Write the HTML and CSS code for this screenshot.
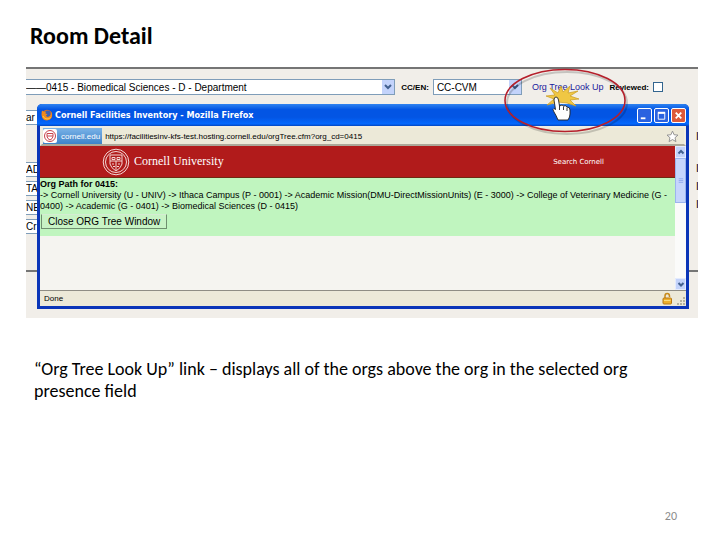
FILE: index.html
```html
<!DOCTYPE html>
<html lang="en">
<head>
  <meta charset="UTF-8" />
  <meta name="viewport" content="width=device-width, initial-scale=1.0"/>
  <title>Room Detail</title>
  <link rel="stylesheet" href="styles.css">
</head>
<body>
  <main class="slide">
    <h1>Room Detail</h1>

    <div class="capture">
      <!-- Room form behind the popup -->
      <form class="form-row">
        <select class="org-select" aria-label="Organization">
          <option>——0415 - Biomedical Sciences - D - Department</option>
        </select>
        <label class="bold-label" for="ccen">CC/EN:</label>
        <select class="cc-select" id="ccen">
          <option>CC-CVM</option>
        </select>
        <a class="lookup-link" href="#">Org Tree Look Up</a>
        <label class="bold-label" for="reviewed">Reviewed:</label>
        <input type="checkbox" id="reviewed">
      </form>
      <div class="form-body">
        <div class="side-left">
          <div class="field first">ar</div>
          <div class="field">AD</div>
          <div class="field">TA</div>
          <div class="field">NE</div>
          <div class="field">Cr</div>
        </div>
        <div class="side-right">
          <span class="first">I</span>
          <span>I</span>
          <span>I</span>
          <span>I</span>
        </div>
      </div>
      <div class="form-foot"></div>

      <!-- Popup window -->
      <section class="popup">
        <div class="title-bar">
          <svg class="firefox" viewBox="0 0 12 12">
            <circle cx="6" cy="6" r="5.2" fill="#e8731a"/>
            <circle cx="6.5" cy="4.8" r="3.2" fill="#3c62b4"/>
            <path d="M1 1.5L3 3l2-.4L4.400 4.400l2 .8L4.800 6.800C6 8.800 9 8 9.800 5.500L10 2.500c2 3 1.300 8-4 8.800C1.500 11.300-.4 7 1 1.500z" fill="#f08a1d"/>
            <path d="M2 7c1 3 5 4 7.500 1.500" fill="none" stroke="#ffd24a"/>
          </svg>
          <h2>Cornell Facilities Inventory - Mozilla Firefox</h2>
          <button class="win-btn" aria-label="Minimize"><svg viewBox="0 0 14 14"><path d="M3 10h5" stroke="#fff" stroke-width="2"/></svg></button>
          <button class="win-btn" aria-label="Maximize"><svg viewBox="0 0 14 14"><path d="M3.500 11V4.500h7V11z" fill="none" stroke="#fff"/><path d="M3 4h8" stroke="#fff" stroke-width="2"/></svg></button>
          <button class="win-btn close" aria-label="Close"><svg viewBox="0 0 14 14"><path d="M4 4l6 6M10 4l-6 6" stroke="#fff" stroke-width="2"/></svg></button>
        </div>

        <div class="url-bar">
          <span class="site">
            <svg viewBox="0 0 14 14">
              <rect width="14" height="14" rx="2" fill="#fff"/>
              <circle cx="7" cy="7" r="5.500" fill="none" stroke="#c8444c"/>
              <path d="M4 4.500h6v3Q9.500 10 7 11Q4.500 10 4 7.500zM4 7h6" fill="none" stroke="#c8444c"/>
            </svg>
            cornell.edu
          </span>
          <span class="url">https://facilitiesinv-kfs-test.hosting.cornell.edu/orgTree.cfm?org_cd=0415</span>
          <svg class="star" viewBox="0 0 14 14"><path d="M7 1.200l1.700 3.900 4.200.4-3.200 2.800 1 4.200L7 10.300l-3.700 2.200 1-4.200L1.100 5.500l4.200-.4z" fill="#fff" stroke="#8e8e8e"/></svg>
        </div>

        <div class="content">
          <div class="page">
            <div class="banner">
              <svg class="seal" viewBox="0 0 28 28" fill="none" stroke="#f3d6d4">
                <circle cx="14" cy="14" r="12.800"/>
                <circle cx="14" cy="14" r="10.500"/>
                <path d="M8 7h12v9q-1 4-6 7q-5-3-6-7z"/>
                <path d="M8 13h12M14 13v9M10 9.500h3v2h-3zM15 9.500h3v2h-3zM10 16h2M16 16h2M11 18.500h2M15 18.500h2"/>
              </svg>
              <span class="brand">Cornell University</span>
              <a class="search" href="#">Search Cornell</a>
            </div>
            <div class="org-path">
              <strong>Org Path for 0415:</strong>
              <p>-&gt; Cornell University (U - UNIV) -&gt; Ithaca Campus (P - 0001) -&gt; Academic Mission(DMU-DirectMissionUnits) (E - 3000) -&gt; College of Veterinary Medicine (G -<br>0400) -&gt; Academic (G - 0401) -&gt; Biomedical Sciences (D - 0415)</p>
              <button class="close-tree">Close ORG Tree Window</button>
            </div>
          </div>
          <div class="scrollbar">
            <span class="arrow"><svg viewBox="0 0 10 10"><path d="M2.500 6.500L5 4l2.500 2.500" fill="none" stroke="#42608f" stroke-width="2"/></svg></span>
            <span class="thumb"><svg viewBox="0 0 10 10"><path d="M3 2.500h5M3 4.500h5M3 6.500h5" stroke="#8fa9ee"/></svg></span>
            <span class="arrow down"><svg viewBox="0 0 10 10"><path d="M2.500 4L5 6.500 7.500 4" fill="none" stroke="#42608f" stroke-width="2"/></svg></span>
          </div>
        </div>

        <div class="status-bar">
          <span>Done</span>
          <svg class="lock" viewBox="0 0 14 14">
            <path d="M5 7V4q0-2.500 2.200-2.500T9.500 4v1" fill="none" stroke="#c68a1c" stroke-width="1.500"/>
            <rect x="3" y="6" width="8.500" height="6" rx="1" fill="#eeb02c" stroke="#b87915"/>
            <path d="M4 8.500h6.500" stroke="#fbdc7d"/>
          </svg>
          <svg class="grip" viewBox="0 0 12 14"><path d="M9 5h2v2H9zM6 8h2v2H6zM9 8h2v2H9zM3 11h2v2H3zM6 11h2v2H6zM9 11h2v2H9z" fill="#b5b29f"/></svg>
        </div>
      </section>

      <!-- Click marker -->
      <svg class="marker" viewBox="0 0 128 72">
        <ellipse cx="64" cy="34" rx="60" ry="31" fill="none" stroke="#000" stroke-opacity=".18" stroke-width="2"/>
        <ellipse cx="62" cy="31.500" rx="60" ry="31" fill="none" stroke="#b51f2b" stroke-width="1.600"/>
        <g transform="translate(0 -5)">
          <path d="M55 38L44 41l7-6-8-3 9-1-5-7 8 5 3-7 2 6 7-6-2 7 10-2-8 5 9 3-9 1 6 6-9-3z" fill="#f0c744" stroke="#c99b22" stroke-width=".7"/>
          <path d="M51 36q0-3 2-3t2.500 3l1 6q3-2 4 0q3-1 3.500 1q3 0 3 3v4q0 3-2 6H55q-2-5-4-8q-2-3 0-3.500l1.500 1z" fill="#fff" stroke="#222" stroke-width=".9"/>
          <path d="M56.500 42v4M60.500 42.500V46M64 43.500V47" stroke="#222" stroke-width=".9"/>
        </g>
      </svg>
    </div>

    <p class="caption">“Org Tree Look Up” link – displays all of the orgs above the org in the selected org presence field</p>

    <footer>20</footer>
  </main>
</body>
</html>
```
FILE: styles.css
```css
* {
  box-sizing: border-box;
}

body {
  margin: 0;
  background-color: white;
  color: black;
  font-family: Carlito, Calibri, Lato, sans-serif;
}

.slide {
  display: flex;
  flex-direction: column;
  min-height: 100vh;
  padding: 24px 22px 16px 26px;
}

h1 {
  margin: 0 4px 19px;
  font-size: 24px;
  line-height: 24px;
}

.caption {
  margin: 40px 40px 0 8px;
  font-size: 18px;
  line-height: 22px;
}

footer {
  margin-top: auto;
  padding-right: 21px;
  text-align: right;
  font-size: 12px;
  line-height: 16px;
  color: #8b8b8b;
}

/* Form behind the popup */
.capture {
  position: relative;
  background-color: #f1eee9;
  border-top: 2px solid #757575;
  font-family: "Liberation Sans", Arial, sans-serif;
  font-size: 10px;
}

.form-row {
  display: flex;
  align-items: center;
  padding: 10px 35px 8px 0;
}

select {
  height: 16px;
  padding: 0 14px 0 3px;
  border: 1px solid #7f9db9;
  border-radius: 0;
  appearance: none;
  font: inherit;
  color: black;
  background: white url("data:image/svg+xml,%3Csvg xmlns='http://www.w3.org/2000/svg' viewBox='0 0 12 14'%3E%3Crect width='12' height='14' fill='%23c3d3fb'/%3E%3Cpath d='M3 5l3 3 3-3' fill='none' stroke='%2342608f' stroke-width='2'/%3E%3C/svg%3E") right center / 12px 14px no-repeat;
}

.org-select {
  flex: 1;
  min-width: 0;
  padding-left: 0;
  border-left: none;
}

.cc-select {
  width: 89px;
  margin-right: 10px;
}

.bold-label {
  margin: 0 4px 0 6px;
  font-size: 8px;
  font-weight: bold;
}

.lookup-link {
  color: #1a1a9c;
  font-size: 9px;
  text-decoration: none;
}

input[type="checkbox"] {
  width: 10px;
  height: 10px;
  margin: 0;
  border: 1px solid #33658f;
  appearance: none;
  background-color: white;
}

.form-body {
  display: flex;
  justify-content: space-between;
  padding-top: 7px;
  height: 169px;
  border-bottom: 2px solid #757575;
}

.side-left {
  width: 20px;
}

.field {
  height: 15px;
  margin-bottom: 4px;
  border: 1px solid #7f9db9;
  border-left: none;
  background-color: white;
  line-height: 13px;
  overflow: hidden;
}

.field.first {
  margin-bottom: 37px;
}

.side-right {
  display: flex;
  flex-direction: column;
  width: 2px;
  padding-top: 18px;
  line-height: 18px;
  overflow: hidden;
}

.side-right .first {
  margin-bottom: 14px;
}

.form-foot {
  height: 46px;
}

/* Popup window */
.popup {
  position: absolute;
  top: 35px;
  right: 9px;
  bottom: 9px;
  left: 11px;
  display: flex;
  flex-direction: column;
  padding: 0 3px 3px;
  border-radius: 5px 5px 0 0;
  background-color: #0a35b8;
}

.title-bar {
  display: flex;
  align-items: center;
  gap: 2px;
  height: 22px;
  margin: 0 -3px;
  padding: 0 3px 0 4px;
  border-radius: 5px 5px 0 0;
  background: linear-gradient(#2f83f0, #0355e4 25%, #0355e4 60%, #0468fd 90%, #0345bf);
}

.firefox {
  width: 12px;
  height: 12px;
}

.title-bar h2 {
  flex: 1;
  margin: 0;
  color: white;
  font-family: "DejaVu Sans Condensed", "DejaVu Sans", sans-serif;
  font-size: 9px;
  font-weight: bold;
}

.win-btn {
  width: 15px;
  height: 15px;
  padding: 0;
  border: 1px solid white;
  border-radius: 2px;
  background-color: #2a62e0;
}

.win-btn.close {
  background-color: #dd5a3a;
}

.win-btn svg {
  display: block;
  width: 13px;
  height: 13px;
}

.url-bar {
  display: flex;
  align-items: center;
  gap: 3px;
  height: 20px;
  padding: 0 5px 0 1px;
  border: 2px solid #f0ede2;
  border-bottom-color: #aca899;
  background-color: #ece9d8;
  font-size: 8px;
}

.site {
  display: flex;
  align-items: center;
  gap: 4px;
  height: 16px;
  padding-right: 2px;
  background: linear-gradient(#7ab3e8, #3d82c8);
  color: white;
  font-size: 8px;
}

.site svg {
  width: 14px;
  height: 14px;
}

.url {
  flex: 1;
}

.star {
  width: 13px;
  height: 13px;
}

.content {
  display: flex;
  flex: 1;
  background-color: #f5f4f0;
}

.page {
  flex: 1;
}

.banner {
  display: flex;
  align-items: center;
  height: 32px;
  padding: 0 71px 0 62px;
  background-color: #b11b1b;
  border-bottom: 1px solid #6f2a12;
  color: white;
}

.seal {
  width: 28px;
  height: 28px;
}

.brand {
  flex: 1;
  margin-left: 4px;
  font-family: "Liberation Serif", "Times New Roman", serif;
  font-size: 12px;
}

.search {
  color: white;
  font-family: "DejaVu Sans", sans-serif;
  font-size: 7px;
  text-decoration: none;
}

.org-path {
  height: 58px;
  padding-top: 1px;
  background-color: #c0f5bf;
  font-size: 9px;
  line-height: 11px;
  white-space: nowrap;
}

.org-path strong {
  display: block;
}

.org-path p {
  margin: 0;
}

.close-tree {
  display: block;
  height: 15px;
  margin: 2px 0 0 1px;
  padding: 0 6px;
  border: 1px solid #6f8f6f;
  border-top-color: #d5ecd3;
  background-color: #c8f3c5;
  font: inherit;
  font-size: 10px;
}

.scrollbar {
  display: flex;
  flex-direction: column;
  width: 11px;
  background-color: #fbfbfa;
}

.scrollbar svg {
  display: block;
  width: 10px;
  height: 10px;
}

.arrow {
  height: 12px;
  border: 1px solid #e4ebfd;
  background-color: #c3d3fb;
}

.arrow.down {
  margin-top: auto;
}

.thumb {
  display: flex;
  align-items: center;
  height: 45px;
  border: 1px solid #9cb5ee;
  background-color: #c6d5fd;
}

.status-bar {
  display: flex;
  align-items: center;
  height: 16px;
  padding-left: 4px;
  border-top: 1px solid #8f8d84;
  background-color: #ece9d8;
  font-size: 8px;
}

.status-bar span {
  flex: 1;
}

.lock {
  width: 14px;
  height: 14px;
}

.grip {
  width: 12px;
  height: 14px;
}

.marker {
  position: absolute;
  top: 0;
  right: 67px;
  width: 128px;
  height: 72px;
  overflow: visible;
}
```
